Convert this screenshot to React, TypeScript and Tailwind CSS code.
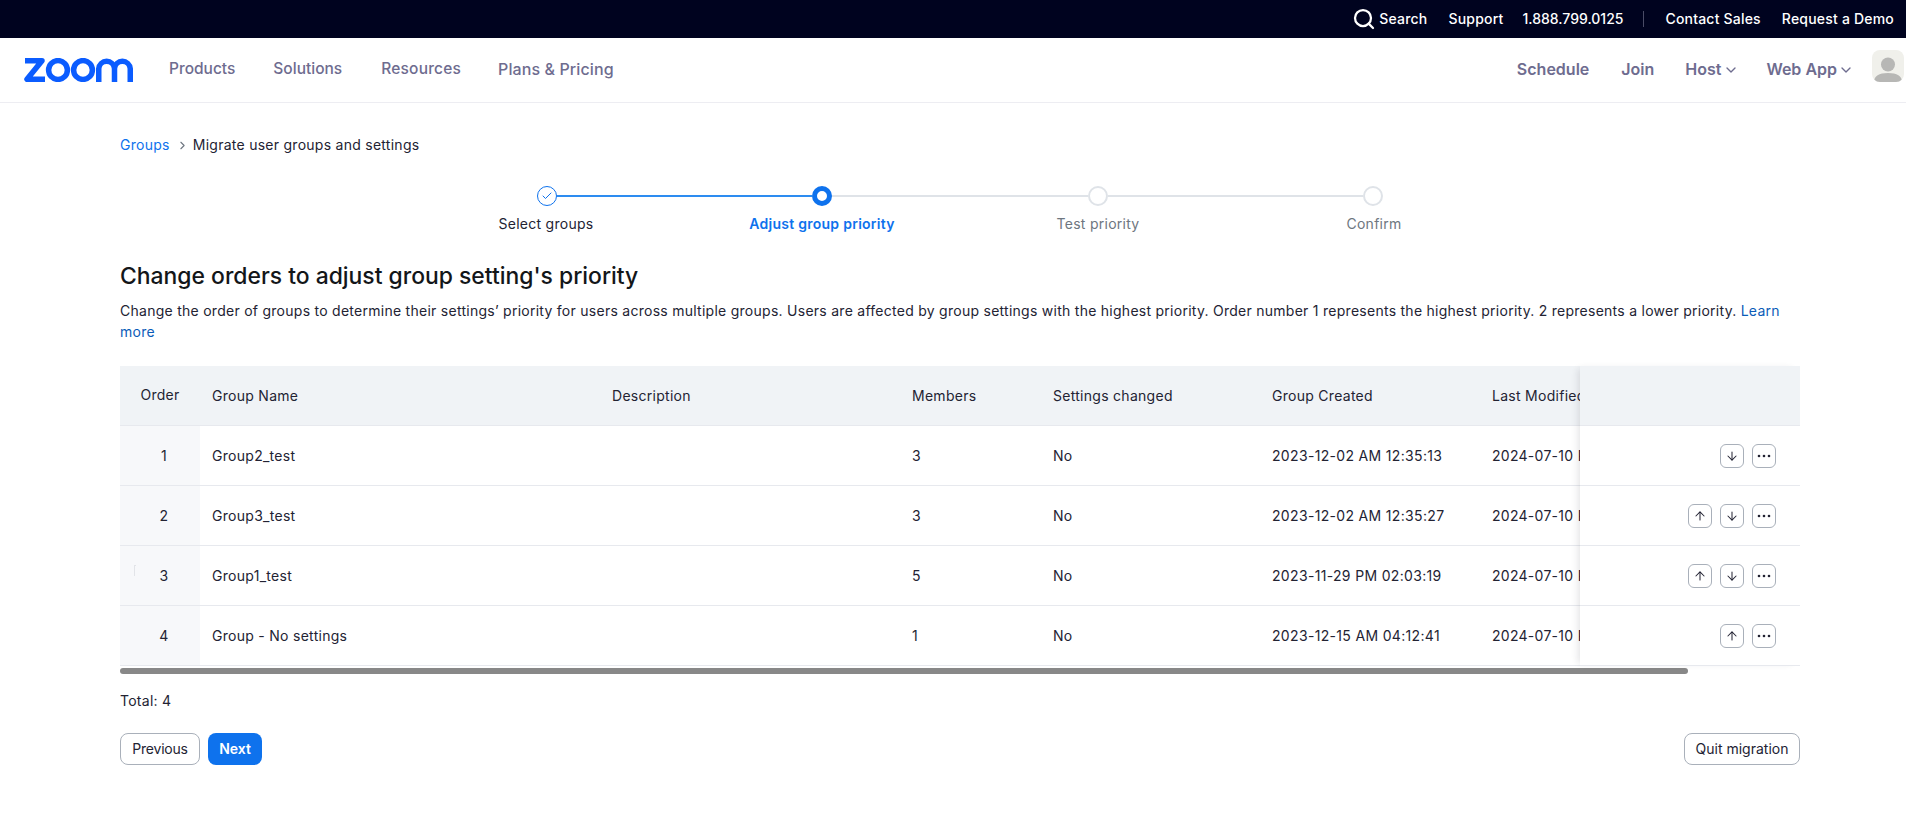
import React from "react";
import { ArrowDown, ArrowUp, Check, ChevronDown, ChevronRight, Search } from "lucide-react";

type Group = {
  order: number;
  name: string;
  members: number;
  created: string;
  canUp: boolean;
  canDown: boolean;
};

const GROUPS: Group[] = [
  { order: 1, name: "Group2_test", members: 3, created: "2023-12-02 AM 12:35:13", canUp: false, canDown: true },
  { order: 2, name: "Group3_test", members: 3, created: "2023-12-02 AM 12:35:27", canUp: true, canDown: true },
  { order: 3, name: "Group1_test", members: 5, created: "2023-11-29 PM 02:03:19", canUp: true, canDown: true },
  { order: 4, name: "Group - No settings", members: 1, created: "2023-12-15 AM 04:12:41", canUp: true, canDown: false },
];

const STEPS = [
  { label: "Select groups", className: "text-[#232333]" },
  { label: "Adjust group priority", className: "text-[#0e72ed] font-semibold" },
  { label: "Test priority", className: "text-[#6e7680]" },
  { label: "Confirm", className: "text-[#6e7680]" },
];

function ZoomLogo() {
  return (
    <svg width="109" height="24" viewBox="0 0 109 24" fill="none" stroke="#0b5cff" strokeWidth="5.5" aria-label="Zoom">
      <path d="M1 2.75H18L3 21.25H21" strokeLinejoin="round" />
      <circle cx="34" cy="12" r="9.4" />
      <circle cx="59" cy="12" r="9.4" />
      <path d="M74.75 24V10.6a7.9 7.9 0 0 1 15.75 0V24M90.5 10.6a7.9 7.9 0 0 1 15.75 0V24" />
    </svg>
  );
}

function Avatar() {
  return (
    <div className="w-8 h-8 mb-2 rounded-lg bg-[#f0f0eb] overflow-hidden flex items-end justify-center">
      <svg width="28" height="26" viewBox="0 0 28 26" fill="#b7b7b5">
        <circle cx="14" cy="8.5" r="7" />
        <path d="M0 26c0-6 5-9 14-9s14 3 14 9z" />
      </svg>
    </div>
  );
}

function IconButton({ children }: { children: React.ReactNode }) {
  return (
    <button className="w-6 h-6 rounded-md border border-[#a9b0ba] bg-white flex items-center justify-center text-[#232333]">
      {children}
    </button>
  );
}

function Dots() {
  return (
    <svg width="14" height="4" viewBox="0 0 14 4" fill="#232333">
      <circle cx="2" cy="2" r="1.3" />
      <circle cx="7" cy="2" r="1.3" />
      <circle cx="12" cy="2" r="1.3" />
    </svg>
  );
}

function Stepper() {
  return (
    <div className="w-[1104px] mx-auto mt-[30px]">
      <div className="flex items-center px-[129px] h-5">
        <span className="w-5 h-5 shrink-0 rounded-full border border-[#0e72ed] flex items-center justify-center text-[#0e72ed]">
          <Check size={12} strokeWidth={2} />
        </span>
        <span className="flex-1 h-0.5 bg-[#2d8cf0]" />
        <span className="w-5 h-5 shrink-0 rounded-full border-[5px] border-[#0e72ed] bg-white" />
        <span className="flex-1 h-0.5 bg-[#dfe3e8]" />
        <span className="w-5 h-5 shrink-0 rounded-full border-2 border-[#dfe3e8] bg-white" />
        <span className="flex-1 h-0.5 bg-[#dfe3e8]" />
        <span className="w-5 h-5 shrink-0 rounded-full border-2 border-[#dfe3e8] bg-white" />
      </div>
      <div className="grid grid-cols-4 mt-[7px] text-sm leading-[22px] text-center">
        {STEPS.map((s) => (
          <div key={s.label} className={s.className}>
            {s.label}
          </div>
        ))}
      </div>
    </div>
  );
}

function GroupTable() {
  return (
    <div className="mt-6 w-[1680px] flex text-sm text-[#232333] tracking-[0.28px]">
      <div className="w-[1460px] overflow-hidden">
        <div className="w-[1600px] h-[60px] flex items-center bg-[#f0f3f6] border-b border-[#e7e9ee]">
          <div className="w-20 text-center -mt-0.5">Order</div>
          <div className="w-[400px] pl-3">Group Name</div>
          <div className="w-[300px] pl-3">Description</div>
          <div className="w-[141px] pl-3">Members</div>
          <div className="w-[219px] pl-3">Settings changed</div>
          <div className="w-[220px] pl-3">Group Created</div>
          <div className="w-[240px] pl-3 whitespace-nowrap">Last Modified</div>
        </div>
        {GROUPS.map((g) => (
          <div key={g.order} className="w-[1600px] h-[60px] flex items-center border-b border-[#e7e9ee]">
            <div className="relative w-20 h-full bg-[#f7f8fa] flex items-center justify-center pl-2">
              {g.order === 3 && (
                <span className="absolute left-3.5 top-[19px] w-0.5 h-[11px] border-l border-t border-[#e2e4e8]" />
              )}
              {g.order}
            </div>
            <div className="w-[400px] pl-3">{g.name}</div>
            <div className="w-[300px] pl-3" />
            <div className="w-[141px] pl-3">{g.members}</div>
            <div className="w-[219px] pl-3">No</div>
            <div className="w-[220px] pl-3 whitespace-nowrap tracking-[0.33px]">{g.created}</div>
            <div className="w-[240px] pl-3 whitespace-nowrap">2024-07-10 PM 03:12:11</div>
          </div>
        ))}
      </div>
      <div className="w-[220px] relative z-10 bg-white shadow-[-5px_0_7px_-3px_rgba(35,35,51,0.12)]">
        <div className="h-[60px] bg-[#f0f3f6] border-b border-[#e7e9ee]" />
        {GROUPS.map((g) => (
          <div key={g.order} className="h-[60px] flex items-center justify-end gap-2 pr-6 border-b border-[#e7e9ee]">
            {g.canUp && (
              <IconButton>
                <ArrowUp size={14} strokeWidth={1.75} />
              </IconButton>
            )}
            {g.canDown && (
              <IconButton>
                <ArrowDown size={14} strokeWidth={1.75} />
              </IconButton>
            )}
            <IconButton>
              <Dots />
            </IconButton>
          </div>
        ))}
      </div>
    </div>
  );
}

export default function App() {
  return (
    <div className="h-[818px] bg-white font-['Inter',sans-serif] overflow-hidden">
      {/* Top bar */}
      <div className="h-[38px] bg-[#00031f] flex items-center justify-end pr-3 text-sm font-medium tracking-[0.2px] text-white">
        <Search size={24} strokeWidth={2.25} className="mr-[3px]" />
        <span className="mr-[21px]">Search</span>
        <span className="mr-[19px]">Support</span>
        <span className="tracking-normal">1.888.799.0125</span>
        <span className="w-px h-4 bg-[#4a4c66] ml-5 mr-[21px]" />
        <span className="mr-[21px]">Contact Sales</span>
        <span>Request a Demo</span>
      </div>

      {/* Main nav */}
      <div className="h-[65px] border-b border-[#ededf2] flex items-center pl-6 pr-0.5">
        <ZoomLogo />
        <nav className="flex items-center gap-[38px] ml-9 pb-0.5 text-[15.5px] font-medium text-[#6e6c8f]">
          <span>Products</span>
          <span>Solutions</span>
          <span className="ml-px tracking-[0.2px]">Resources</span>
          <span className="-ml-px mb-px text-base tracking-[0.1px]">Plans &amp; Pricing</span>
        </nav>
        <div className="ml-auto flex items-center text-base font-semibold text-[#6e6c8f]">
          <span className="mr-8 mb-0.5">Schedule</span>
          <span className="mr-[31px] mb-0.5">Join</span>
          <span className="mb-0.5">Host</span>
          <ChevronDown size={16} className="ml-0.5 mr-[27px]" />
          <span className="mb-0.5">Web App</span>
          <ChevronDown size={16} className="ml-px mr-[18px]" />
          <Avatar />
        </div>
      </div>

      <div className="w-[1680px] ml-[120px] tracking-[0.265px]">
        {/* Breadcrumb */}
        <div className="mt-[31px] h-[22px] flex items-center text-sm">
          <span className="text-[#0e72ed]">Groups</span>
          <ChevronRight size={13} className="ml-1.5 mr-1 text-[#6e7680]" />
          <span className="text-[#232333]">Migrate user groups and settings</span>
        </div>

        <Stepper />

        <h1 className="mt-[25px] text-[22.9px] leading-8 font-medium tracking-normal text-[#131619]">
          Change orders to adjust group setting's priority
        </h1>
        <p className="mt-2 text-sm leading-[21px] text-[#232333]">
          Change the order of groups to determine their settings’ priority for users across multiple groups. Users are
          affected by group settings with the highest priority. Order number 1 represents the highest priority. 2
          represents a lower priority. <span className="text-[#0b5cb8]">Learn more</span>
        </p>

        <GroupTable />

        {/* Horizontal scrollbar */}
        <div className="mt-0.5 w-[1568px] h-1.5 rounded-full bg-[#888888]" />

        <div className="mt-[18px] h-[18px] flex items-center text-sm text-[#232333]">Total: 4</div>

        <div className="mt-[23px] flex items-center gap-2 text-sm tracking-normal">
          <button className="w-20 h-8 rounded-lg border border-[#a9b0ba] bg-white text-[#232333] tracking-[-0.2px]">Previous</button>
          <button className="w-[54px] h-8 rounded-lg bg-[#0e72ed] text-white font-semibold">Next</button>
          <button className="ml-auto w-[116px] h-8 rounded-lg border border-[#a9b0ba] bg-white text-[#232333]">
            Quit migration
          </button>
        </div>
      </div>
    </div>
  );
}
